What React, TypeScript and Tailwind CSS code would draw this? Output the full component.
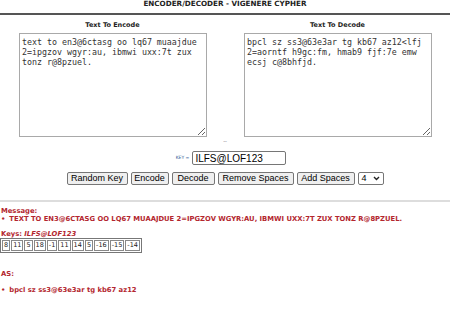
const keys = [8, 11, 5, 18, -1, 11, 14, 5, -16, -15, -14];

const plain = "text to en3@6ctasg oo lq67 muaajdue 2=ipgzov wgyr:au, ibmwi uxx:7t zux tonz r@8pzuel.";
const cipher = "bpcl sz ss3@63e3ar tg kb67 az12<lfj 2=aorntf h9gc:fm, hmab9 fjf:7e emw ecsj c@8bhfjd.";

function Pane({ label, value }: { label: string; value: string }) {
  return (
    <div className="flex flex-col items-center">
      <div className="text-[6.5px] font-bold leading-[8px] text-[#222] mt-[6px]">{label}</div>
      <textarea
        readOnly
        defaultValue={value}
        className="mt-[4px] ml-[1px] w-[188px] h-[104px] border border-[#a9a9a9] bg-white px-[2px] pt-[3px] text-[8.3px] leading-[10px] text-[#333] outline-none"
        style={{ fontFamily: '"DejaVu Sans Mono", monospace' }}
      />
    </div>
  );
}

function Btn({ children, w }: { children: React.ReactNode; w: string }) {
  return (
    <button
      className={`${w} h-[13px] rounded-[2px] border border-[#767676] bg-[#efefef] text-[9px] leading-[11px] text-black`}
      style={{ fontFamily: '"Liberation Sans", Arial, sans-serif' }}
    >
      {children}
    </button>
  );
}

export default function App() {
  return (
    <div
      className="w-[450px] h-[309px] overflow-hidden bg-white"
      style={{ fontFamily: '"DejaVu Sans", Verdana, sans-serif' }}
    >
      <h1 className="-mt-[1px] text-center text-[7.2px] font-bold leading-[9px] text-[#222]">
        ENCODER/DECODER - VIGENERE CYPHER
      </h1>
      <div className="mt-[5px] h-[2px] bg-[#555]" />

      <div className="grid grid-cols-2">
        <Pane label="Text To Encode" value={plain} />
        <Pane label="Text To Decode" value={cipher} />
      </div>

      <div className="mt-[1px] text-center text-[5px] leading-[6px] text-[#556]">--</div>

      <div className="mt-[7px] flex items-center justify-center gap-[3px] pl-[12px]">
        <span className="text-[4.5px] leading-[6px] text-[#3a5f9a]">KEY =</span>
        <input
          readOnly
          defaultValue="ILFS@LOF123"
          className="w-[94px] h-[14px] border border-[#767676] rounded-[2px] px-[2px] text-[10px] leading-[12px] text-black outline-none"
          style={{ fontFamily: '"Liberation Sans", Arial, sans-serif' }}
        />
      </div>

      <div className="mt-[7px] flex items-center justify-center gap-[3px]">
        <Btn w="w-[61px]">Random Key</Btn>
        <Btn w="w-[38px]">Encode</Btn>
        <Btn w="w-[43px]">Decode</Btn>
        <Btn w="w-[76px]">Remove Spaces</Btn>
        <Btn w="w-[58px]">Add Spaces</Btn>
        <div
          className="flex h-[13px] w-[26px] items-center justify-between rounded-[2px] border border-[#767676] bg-white px-[3px] text-[9px] text-black"
          style={{ fontFamily: '"Liberation Sans", Arial, sans-serif' }}
        >
          <span>4</span>
          <svg width="7" height="5" viewBox="0 0 7 5" fill="none" aria-hidden="true">
            <path d="M1 1L3.5 3.5L6 1" stroke="#222" strokeWidth="1.4" />
          </svg>
        </div>
      </div>

      <div className="mt-[15px] h-[2px] bg-[#ddd]" />

      <div className="px-[1px] text-[6.8px] font-bold leading-[8px] text-[#b3262e]">
        <div className="mt-[5px]">Message:</div>
        <div className="flex gap-[4px]">
          <span>•</span>
          <span>TEXT TO EN3@6CTASG OO LQ67 MUAAJDUE 2=IPGZOV WGYR:AU, IBMWI UXX:7T ZUX TONZ R@8PZUEL.</span>
        </div>

        <div className="mt-[7px]">
          Keys: <i>ILFS@LOF123</i>
        </div>
        <table className="-ml-[1px] border-separate border-spacing-[1px] border border-[#777] font-normal text-[#222]">
          <tbody>
            <tr>
              {keys.map((k, i) => (
                <td key={i} className="border border-[#888] px-[1px] text-[6.5px] leading-[9px]">
                  {k}
                </td>
              ))}
            </tr>
          </tbody>
        </table>

        <div className="mt-[17px]">AS:</div>
        <div className="mt-[8px] flex gap-[4px]">
          <span>•</span>
          <span>bpcl sz ss3@63e3ar tg kb67 az12</span>
        </div>
      </div>
    </div>
  );
}
